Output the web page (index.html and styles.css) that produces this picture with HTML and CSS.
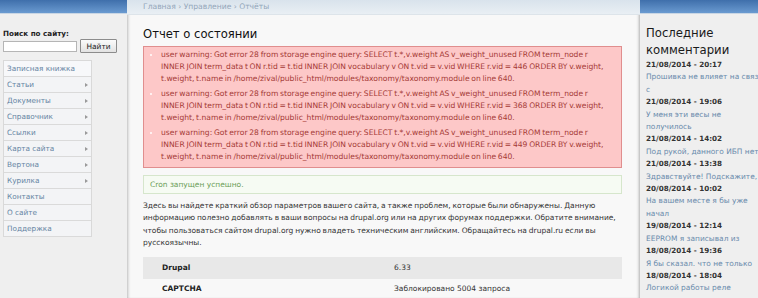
FILE: index.html
```html
<!DOCTYPE html>
<html lang="ru">

<head>
  <meta charset="UTF-8" />
  <meta name="viewport" content="width=device-width, initial-scale=1.0" />
  <title>Отчет о состоянии</title>
  <link rel="stylesheet" href="styles.css">
</head>

<body>
  <div class="layout">
    <div class="left">
      <div class="bar"></div>
      <form class="search">
        <div class="search-title">Поиск по сайту:</div>
        <div class="search-row">
          <input class="search-input" type="text" />
          <button type="button" class="search-button">Найти</button>
        </div>
      </form>
      <ul class="menu">
        <li class="menu-item">Записная книжка</li>
        <li class="menu-item has-sub">Статьи</li>
        <li class="menu-item has-sub">Документы</li>
        <li class="menu-item has-sub">Справочник</li>
        <li class="menu-item has-sub">Ссылки</li>
        <li class="menu-item has-sub">Карта сайта</li>
        <li class="menu-item has-sub">Вертона</li>
        <li class="menu-item has-sub">Курилка</li>
        <li class="menu-item">Контакты</li>
        <li class="menu-item">О сайте</li>
        <li class="menu-item">Поддержка</li>
      </ul>
    </div>

    <div class="main">
      <div class="breadcrumb">Главная › Управление › Отчёты</div>
      <div class="content">
        <h1 class="title">Отчет о состоянии</h1>
        <div class="messages error">
          <ul>
            <li>user warning: Got error 28 from storage engine query: SELECT t.*,v.weight AS v_weight_unused FROM term_node r INNER JOIN term_data t ON r.tid = t.tid INNER JOIN vocabulary v ON t.vid = v.vid WHERE r.vid = 446 ORDER BY v.weight, t.weight, t.name in /home/zival/public_html/modules/taxonomy/taxonomy.module on line 640.</li>
            <li>user warning: Got error 28 from storage engine query: SELECT t.*,v.weight AS v_weight_unused FROM term_node r INNER JOIN term_data t ON r.tid = t.tid INNER JOIN vocabulary v ON t.vid = v.vid WHERE r.vid = 368 ORDER BY v.weight, t.weight, t.name in /home/zival/public_html/modules/taxonomy/taxonomy.module on line 640.</li>
            <li>user warning: Got error 28 from storage engine query: SELECT t.*,v.weight AS v_weight_unused FROM term_node r INNER JOIN term_data t ON r.tid = t.tid INNER JOIN vocabulary v ON t.vid = v.vid WHERE r.vid = 449 ORDER BY v.weight, t.weight, t.name in /home/zival/public_html/modules/taxonomy/taxonomy.module on line 640.</li>
          </ul>
        </div>
        <div class="messages status">Cron запущен успешно.</div>
        <p class="intro">Здесь вы найдете краткий обзор параметров вашего сайта, а также проблем, которые были обнаружены. Данную информацию полезно добавлять в ваши вопросы на drupal.org или на других форумах поддержки. Обратите внимание, чтобы пользоваться сайтом drupal.org нужно владеть техническим английским. Обращайтесь на drupal.ru если вы русскоязычны.</p>
        <table class="report">
          <tr class="odd">
            <th>Drupal</th>
            <td>6.33</td>
          </tr>
          <tr class="even">
            <th>CAPTCHA</th>
            <td>Заблокировано 5004 запроса</td>
          </tr>
        </table>
      </div>
    </div>

    <div class="right">
      <div class="bar"></div>
      <div class="block">
        <h2 class="block-title">Последние комментарии</h2>
        <ul class="comments">
          <li><span class="date">21/08/2014 - 20:17</span><a class="comment">Прошивка не влияет на связь с</a></li>
          <li><span class="date">21/08/2014 - 19:06</span><a class="comment">У меня эти весы не получилось</a></li>
          <li><span class="date">21/08/2014 - 14:02</span><a class="comment">Под рукой, данного ИБП нет</a></li>
          <li><span class="date">21/08/2014 - 13:38</span><a class="comment">Здравствуйте! Подскажите,</a></li>
          <li><span class="date">20/08/2014 - 10:02</span><a class="comment">На вашем месте я бы уже начал</a></li>
          <li><span class="date">19/08/2014 - 12:14</span><a class="comment">EEPROM я записывал из</a></li>
          <li><span class="date">18/08/2014 - 19:36</span><a class="comment">Я бы сказал. что не только</a></li>
          <li><span class="date">18/08/2014 - 18:04</span><a class="comment">Логикой работы реле управлять</a></li>
        </ul>
      </div>
    </div>
  </div>
</body>

</html>
```

FILE: styles.css
```css
body {
  margin: 0;
  overflow: hidden;
  background: #efefef;
  font-family: "DejaVu Sans", Verdana, sans-serif;
  font-size: 7.5px;
  color: #333;
}

.layout {
  display: flex;
  width: 800px;
  height: 298px;
}

.bar {
  height: 13px;
  background: linear-gradient(#3f6fab, #6a9ad0);
  border-bottom: 1px solid #c9d6e4;
}

/* левая колонка */
.left {
  width: 127px;
  flex: none;
}

.search {
  margin: 0;
  padding: 15px 3px 0;
}

.search-title {
  font-size: 7.2px;
  font-weight: bold;
  color: #1e1e1e;
  line-height: 9px;
}

.search-row {
  display: flex;
  align-items: center;
  gap: 3px;
  margin-top: 1px;
}

.search-input {
  width: 74px;
  height: 11px;
  padding: 0;
  border: 1px solid #b5b5b5;
  background: #fff;
  box-sizing: border-box;
}

.search-button {
  width: 37px;
  height: 14px;
  padding: 0;
  border: 1px solid #8c8c8c;
  border-radius: 1px;
  background: linear-gradient(#fbfbfb, #e2e2e2);
  font-family: inherit;
  font-size: 7.4px;
  color: #222;
}

.menu {
  list-style: none;
  margin: 7px 35px 0 3px;
  padding: 0;
  border: 1px solid #d9d9d9;
  border-bottom: none;
  background: #f3f4f6;
  font-size: 7.3px;
}

.menu-item {
  display: flex;
  align-items: center;
  justify-content: space-between;
  height: 15px;
  padding: 0 3px 0 3px;
  border-bottom: 1px solid #dadada;
  color: #6584a3;
}

.menu-item:first-child {
  background: #f7f8fa;
}

.has-sub::after {
  content: "";
  border-left: 3px solid #9a9a9a;
  border-top: 2px solid transparent;
  border-bottom: 2px solid transparent;
}

/* центральная колонка */
.main {
  width: 513px;
  flex: none;
  background: #f8f8f8;
  box-shadow: inset 3px 0 3px -2px rgba(0, 0, 0, .25), inset -3px 0 3px -2px rgba(0, 0, 0, .3);
}

.breadcrumb {
  height: 14px;
  line-height: 14px;
  padding-left: 16px;
  background: linear-gradient(#d9e3ec, #e9eff4);
  border-bottom: 1px solid #dde4ea;
  color: #93a6ba;
  font-size: 7.6px;
}

.content {
  padding: 0 18px 0 16px;
}

.title {
  margin: 11px 0 3px;
  font-size: 11.6px;
  font-weight: normal;
  line-height: 17px;
  color: #111;
}

.messages {
  border: 1px solid;
}

.error {
  padding: 2px 9px 4px 8px;
  background: #fdc8c8;
  border-color: #e08e8e;
  color: #a53a36;
  font-size: 7.6px;
  word-spacing: -0.7px;
}

.error ul {
  margin: 0;
  padding-left: 9px;
  list-style: square;
}

.error li {
  line-height: 12px;
  margin-bottom: 3px;
}

.error li:last-child {
  margin-bottom: 0;
}

.error li::marker {
  color: #fff0f0;
}

.status {
  margin-top: 7px;
  padding-left: 6px;
  line-height: 17px;
  background: #f6fbf3;
  border-color: #d6e6cc;
  color: #6c9e58;
}

.intro {
  margin: 6px 0 7px;
  line-height: 12.4px;
  color: #333;
  word-spacing: -0.5px;
}

.report {
  width: 100%;
  border-collapse: collapse;
}

.report th {
  width: 230px;
  padding-left: 19px;
  text-align: left;
  color: #222;
}

.report .odd {
  height: 22px;
  background: #e8e8e8;
}

.report .even {
  height: 20px;
}

/* правая колонка */
.right {
  width: 160px;
  flex: none;
}

.block {
  padding: 0 0 0 6px;
  width: 117.5px;
}

.block-title {
  margin: 11px 0 0;
  font-size: 11.7px;
  font-weight: normal;
  line-height: 17px;
  color: #1a1a1a;
}

.comments {
  list-style: none;
  margin: 0;
  padding: 0;
  font-size: 7.45px;
  line-height: 12.4px;
}

.date {
  display: block;
  font-size: 7.2px;
  font-weight: bold;
  color: #333;
}

.comment {
  display: block;
  color: #6a8bac;
}
```
